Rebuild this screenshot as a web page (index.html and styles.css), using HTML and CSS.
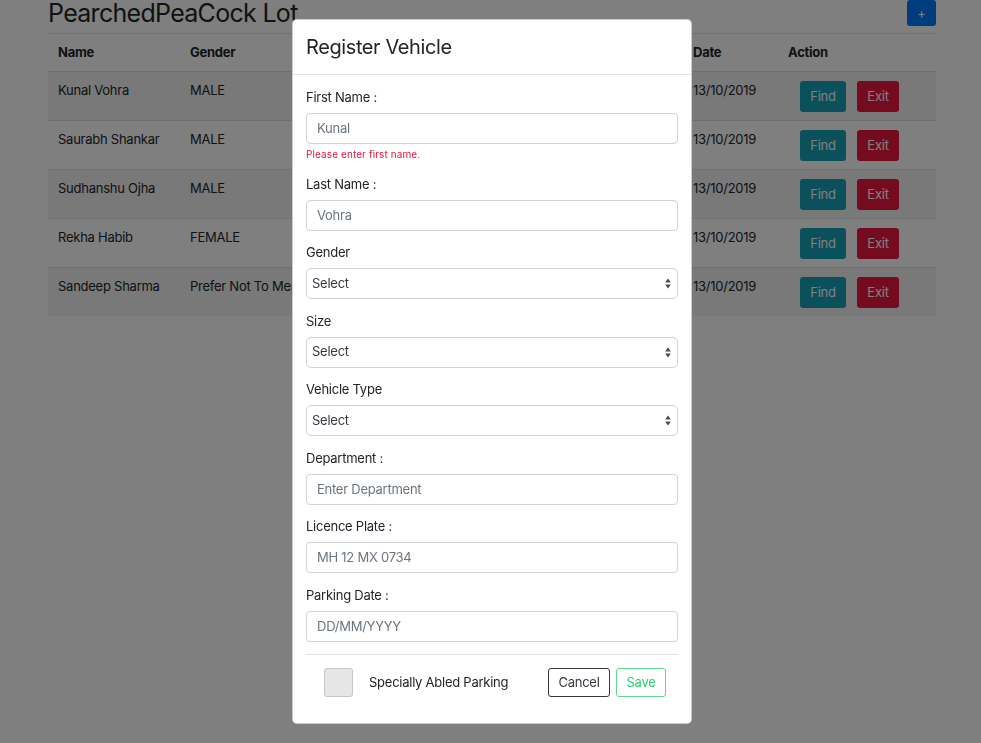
FILE: index.html
```html
<!DOCTYPE html>
<html lang="en">
<head>
<meta charset="utf-8">
<title>PearchedPeaCock Lot</title>
<link rel="stylesheet" href="styles.css">
</head>
<body>
<div class="page">
  <div class="topbar">
    <h1 class="title">PearchedPeaCock Lot</h1>
    <button class="btn btn-add">+</button>
  </div>
  <table class="grid">
    <colgroup>
      <col class="c-name"><col class="c-gender"><col class="c-size"><col class="c-type"><col class="c-plate"><col class="c-date"><col class="c-action">
    </colgroup>
    <thead>
      <tr><th>Name</th><th>Gender</th><th>Size</th><th>Vehicle Type</th><th>Licence Plate</th><th>Date</th><th>Action</th></tr>
    </thead>
    <tbody>
      <tr><td>Kunal Vohra</td><td>MALE</td><td>Medium</td><td>Car</td><td>MH 12 MX 0734</td><td>13/10/2019</td><td class="actions"><button class="btn btn-find">Find</button><button class="btn btn-exit">Exit</button></td></tr>
      <tr><td>Saurabh Shankar</td><td>MALE</td><td>Small</td><td>Bike</td><td>MH 12 AB 1234</td><td>13/10/2019</td><td class="actions"><button class="btn btn-find">Find</button><button class="btn btn-exit">Exit</button></td></tr>
      <tr><td>Sudhanshu Ojha</td><td>MALE</td><td>Large</td><td>SUV</td><td>MH 14 CD 5678</td><td>13/10/2019</td><td class="actions"><button class="btn btn-find">Find</button><button class="btn btn-exit">Exit</button></td></tr>
      <tr><td>Rekha Habib</td><td>FEMALE</td><td>Medium</td><td>Car</td><td>MH 12 EF 9012</td><td>13/10/2019</td><td class="actions"><button class="btn btn-find">Find</button><button class="btn btn-exit">Exit</button></td></tr>
      <tr><td>Sandeep Sharma</td><td>Prefer Not To Mention</td><td>Small</td><td>Bike</td><td>MH 12 GH 3456</td><td>13/10/2019</td><td class="actions"><button class="btn btn-find">Find</button><button class="btn btn-exit">Exit</button></td></tr>
    </tbody>
  </table>
</div>

<div class="backdrop"></div>

<div class="modal">
  <div class="modal-header">
    <h2 class="modal-title">Register Vehicle</h2>
  </div>
  <form class="modal-body">
    <div class="group">
      <label class="lbl">First Name :</label>
      <input class="field" type="text" placeholder="Kunal">
      <div class="err">Please enter first name.</div>
    </div>
    <div class="group">
      <label class="lbl">Last Name :</label>
      <input class="field" type="text" placeholder="Vohra">
    </div>
    <div class="group">
      <label class="lbl">Gender</label>
      <div class="select-wrap">
        <select class="select"><option>Select</option></select>
        <svg class="select-arrow" width="6" height="11" viewBox="0 0 6 11"><path d="M3 0.5 L5.8 4.5 H0.2 Z M3 10.5 L5.8 6.5 H0.2 Z" fill="#4a4a4a"/></svg>
      </div>
    </div>
    <div class="group">
      <label class="lbl">Size</label>
      <div class="select-wrap">
        <select class="select"><option>Select</option></select>
        <svg class="select-arrow" width="6" height="11" viewBox="0 0 6 11"><path d="M3 0.5 L5.8 4.5 H0.2 Z M3 10.5 L5.8 6.5 H0.2 Z" fill="#4a4a4a"/></svg>
      </div>
    </div>
    <div class="group">
      <label class="lbl">Vehicle Type</label>
      <div class="select-wrap">
        <select class="select"><option>Select</option></select>
        <svg class="select-arrow" width="6" height="11" viewBox="0 0 6 11"><path d="M3 0.5 L5.8 4.5 H0.2 Z M3 10.5 L5.8 6.5 H0.2 Z" fill="#4a4a4a"/></svg>
      </div>
    </div>
    <div class="group">
      <label class="lbl">Department :</label>
      <input class="field" type="text" placeholder="Enter Department">
    </div>
    <div class="group">
      <label class="lbl">Licence Plate :</label>
      <input class="field" type="text" placeholder="MH 12 MX 0734">
    </div>
    <div class="group">
      <label class="lbl">Parking Date :</label>
      <input class="field" type="text" placeholder="DD/MM/YYYY">
    </div>
    <div class="footer">
      <span class="check"></span>
      <span class="check-label">Specially Abled Parking</span>
      <div class="footer-actions">
        <button type="button" class="btn btn-cancel">Cancel</button>
        <button type="button" class="btn btn-save">Save</button>
      </div>
    </div>
  </form>
</div>
</body>
</html>
```

FILE: styles.css
```css
* { box-sizing: border-box; }

html, body {
  margin: 0;
  padding: 0;
  background: #ffffff;
  font-family: "Inter", "Roboto", sans-serif;
  color: #212529;
  font-size: 13px;
  letter-spacing: -0.25px;
}

.page {
  width: 888px;
  margin-left: 48px;
}

.topbar {
  display: flex;
  justify-content: space-between;
  align-items: flex-start;
  height: 33px;
}

.title {
  margin: 0;
  font-size: 25px;
  line-height: 26px;
  font-weight: 400;
  color: #212529;
  letter-spacing: -0.7px;
}

.btn {
  font-family: inherit;
  font-size: 13px;
  letter-spacing: -0.25px;
  border: 1px solid transparent;
  border-radius: 3px;
  cursor: pointer;
  padding: 0;
  height: 31px;
  line-height: 29px;
}

.btn-add {
  width: 29px;
  height: 26px;
  line-height: 24px;
  background: #007bff;
  color: #ffffff;
  font-size: 13px;
}

.grid {
  width: 888px;
  table-layout: fixed;
  border-collapse: separate;
  border-spacing: 0;
}

.c-name { width: 132px; }
.c-gender { width: 140px; }
.c-size { width: 120px; }
.c-type { width: 120px; }
.c-plate { width: 123px; }
.c-date { width: 95px; }
.c-action { width: 158px; }

.grid th {
  text-align: left;
  font-weight: 700;
  font-size: 13px;
  line-height: 19px;
  padding: 9px 10px 9px;
  border-top: 1px solid #dee2e6;
  border-bottom: 1px solid #dee2e6;
  white-space: nowrap;
}

.grid td {
  vertical-align: top;
  font-size: 13px;
  line-height: 19px;
  padding: 9px 10px 8px;
  border-bottom: 1px solid #dee2e6;
  white-space: nowrap;
  overflow: hidden;
}

.grid tbody tr:nth-child(odd) td { background: rgba(0, 0, 0, 0.05); }
.grid tbody tr:last-child td { border-bottom: none; }

.actions {
  display: flex;
  gap: 11px;
  padding-left: 22px !important;
}

.btn-find {
  width: 46px;
  background: #17a2b8;
  color: #ffffff;
}

.btn-exit {
  width: 42px;
  background: #e8173f;
  color: #ffffff;
}

.backdrop {
  position: fixed;
  inset: 0;
  background: rgba(0, 0, 0, 0.5);
}

.modal {
  position: absolute;
  left: 292px;
  top: 19px;
  width: 400px;
  background: #ffffff;
  border: 1px solid rgba(0, 0, 0, 0.2);
  border-radius: 5px;
}

.modal-header {
  padding: 14px 13px;
  border-bottom: 1px solid #dee2e6;
}

.modal-title {
  margin: 0;
  font-size: 20px;
  line-height: 26px;
  font-weight: 400;
  color: #212529;
  letter-spacing: -0.4px;
}

.modal-body {
  margin: 0;
  padding: 13px 13px 26px;
}

.group {
  margin-bottom: 12.5px;
}

.lbl {
  display: block;
  font-size: 13px;
  line-height: 19px;
  margin-bottom: 6px;
  color: #212529;
}

.field {
  display: block;
  width: 100%;
  height: 31px;
  border: 1px solid #ced4da;
  border-radius: 4px;
  padding: 0 10px 1px;
  font-family: inherit;
  font-size: 13px;
  letter-spacing: -0.25px;
  color: #495057;
  background: #ffffff;
}

.field::placeholder { color: #6c757d; }

.err {
  margin-top: 3px;
  font-size: 10px;
  line-height: 15px;
  color: #e8173f;
  letter-spacing: 0.1px;
}

.select-wrap {
  position: relative;
}

.select {
  display: block;
  width: 100%;
  height: 31px;
  -webkit-appearance: none;
  appearance: none;
  border: 1px solid #ced4da;
  border-radius: 5px;
  padding: 0 5px 2px;
  font-family: inherit;
  font-size: 13px;
  letter-spacing: -0.25px;
  color: #343a40;
  background: #ffffff;
}

.select-arrow {
  position: absolute;
  right: 7px;
  top: 10px;
}

.footer {
  display: flex;
  align-items: center;
  border-top: 1px solid #dee2e6;
  padding: 13px 12px 0 18px;
}

.check {
  width: 29px;
  height: 29px;
  background: #e6e6e6;
  border: 1px solid #c6c6c6;
  border-radius: 3px;
}

.check-label {
  margin-left: 16px;
  font-size: 13px;
  line-height: 19px;
  color: #212529;
}

.footer-actions {
  margin-left: auto;
  display: flex;
  gap: 6px;
}

.btn-cancel {
  width: 62px;
  height: 29px;
  line-height: 27px;
  background: #ffffff;
  border: 1px solid #343a40;
  color: #343a40;
}

.btn-save {
  width: 50px;
  height: 29px;
  line-height: 27px;
  background: #ffffff;
  border: 1px solid #5fd68e;
  color: #2ecc71;
}
```
